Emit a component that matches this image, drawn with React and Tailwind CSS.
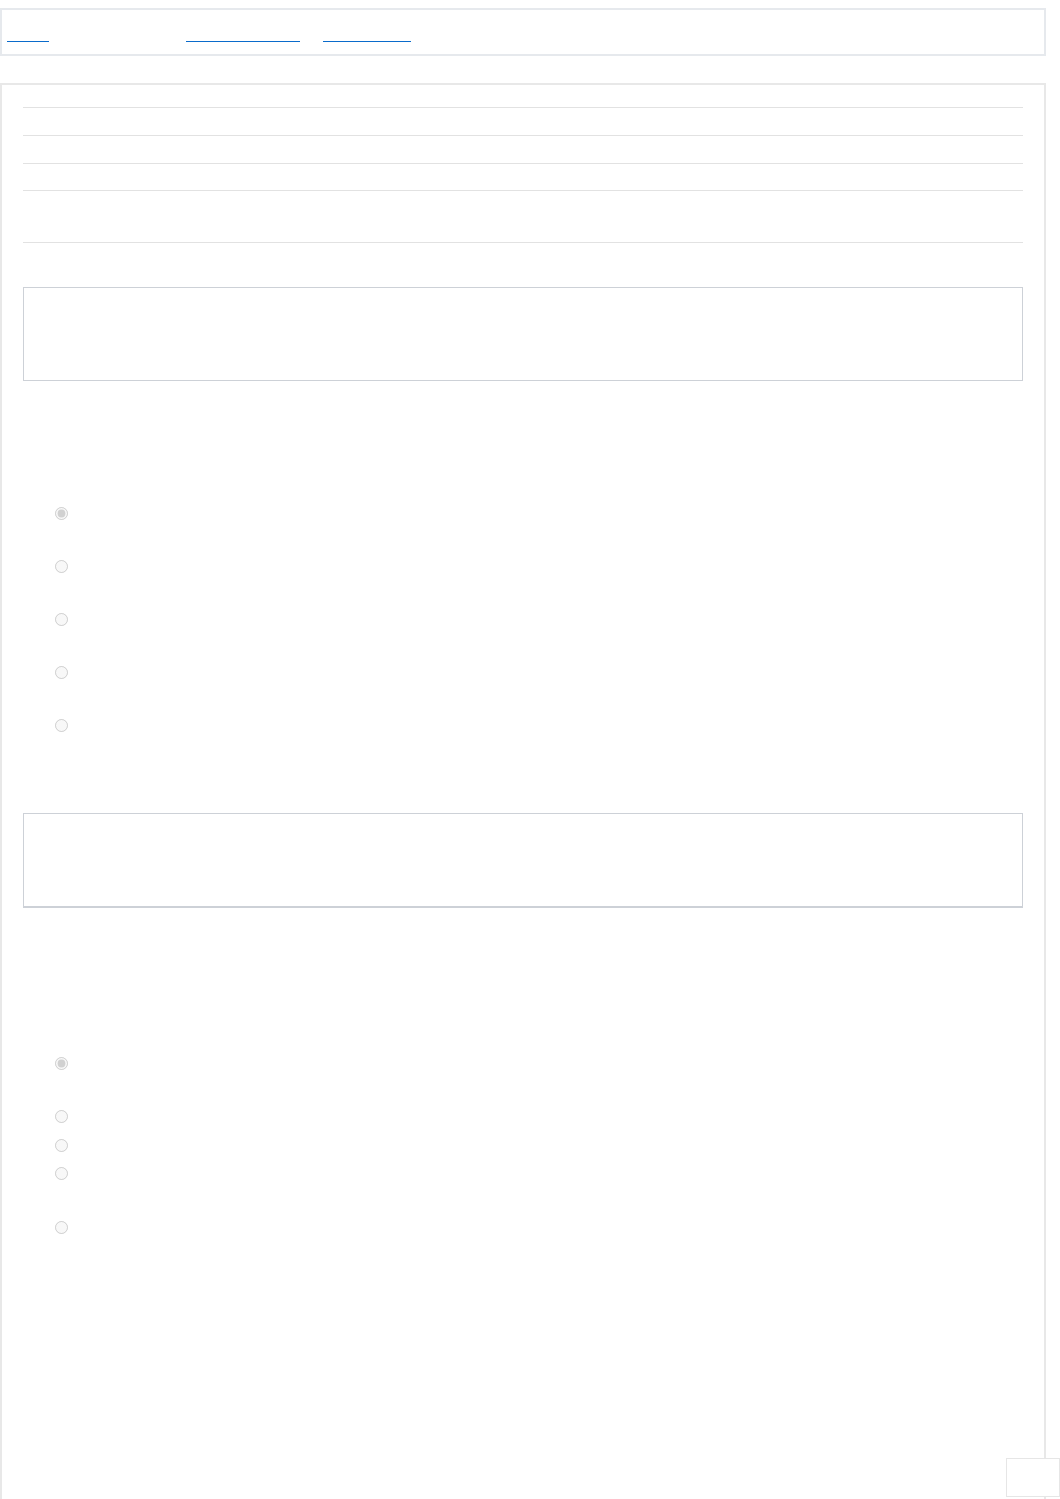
import React from "react";

const Radio = ({ checked, className }) => (
  <div className={className}>
    <input
      type="radio"
      disabled
      defaultChecked={checked}
      className="m-0 ml-[32px] block h-[13px] w-[13px]"
    />
  </div>
);

const NavLink = ({ label, className }) => (
  <a href="#" className={"flex flex-col no-underline " + className}>
    <span className="h-[19px] overflow-hidden text-transparent">{label}</span>
    <span className="h-px bg-[#0a6bcb]" />
  </a>
);

export default function App() {
  return (
    <div className="font-['Liberation_Sans',Arial,sans-serif] text-sm bg-white">
      {/* top nav */}
      <div className="mt-2 w-[1046px] h-[48px] border-2 border-[#e6e9ed] flex items-start pt-[12px] pl-[5px]">
        <NavLink label="Home" className="w-[42px]" />
        <NavLink label="Resources" className="ml-[137px] w-[114px]" />
        <NavLink label="Contact" className="ml-[23px] w-[88px]" />
      </div>

      {/* main panel */}
      <div className="mt-[27px] w-[1046px] min-h-[1420px] border-2 border-b-0 border-[#e8e8e8] px-[21px]">
        <div className="h-[23px] border-b border-[#e2e2e2]" />
        <div className="h-[28px] border-b border-[#e2e2e2]" />
        <div className="h-[28px] border-b border-[#e2e2e2]" />
        <div className="h-[27px] border-b border-[#e2e2e2]" />
        <div className="h-[52px] border-b border-[#e2e2e2]" />

        <div className="mt-[44px] h-[94px] border border-[#cdd1d7]" />

        <Radio checked className="mt-[126px]" />
        <Radio className="mt-[40px]" />
        <Radio className="mt-[40px]" />
        <Radio className="mt-[40px]" />
        <Radio className="mt-[40px]" />

        <div className="mt-[81px] h-[95px] border border-b-2 border-[#cdd1d7]" />

        <Radio checked className="mt-[149px]" />
        <Radio className="mt-[40px]" />
        <Radio className="mt-[16px]" />
        <Radio className="mt-[15px]" />
        <Radio className="mt-[41px]" />
      </div>

      {/* floating corner button */}
      <div className="fixed right-0 bottom-[2px] w-[54px] h-[39px] bg-white border border-[#e6e6e6]" />
    </div>
  );
}
